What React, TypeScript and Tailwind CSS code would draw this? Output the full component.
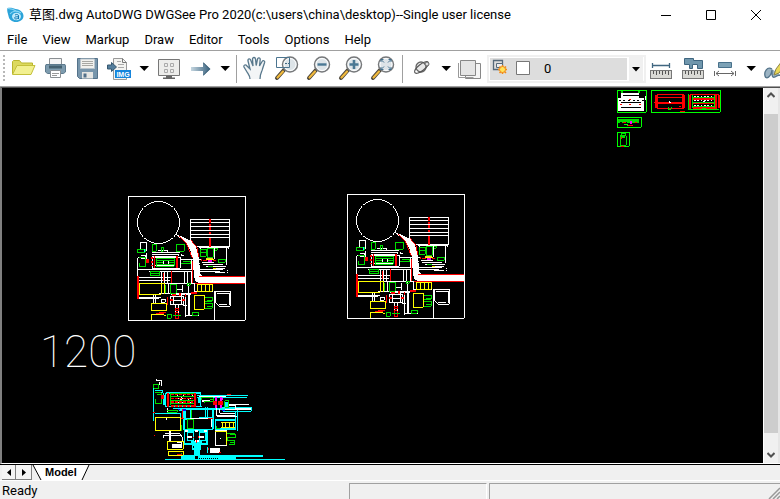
import React from "react";

const menus = ["File", "View", "Markup", "Draw", "Editor", "Tools", "Options", "Help"];

function Tool({ label, children }: { label: string; children: React.ReactNode }) {
  return (
    <button type="button" aria-label={label} className="h-8 w-8 shrink-0">
      <svg viewBox="0 0 32 32" className="h-8 w-8" fill="none">
        {children}
      </svg>
    </button>
  );
}

function Caret({ label }: { label: string }) {
  return (
    <button type="button" aria-label={label} className="h-8 w-4 shrink-0">
      <svg viewBox="0 0 16 32" className="h-8 w-4">
        <path d="M3.500 14h9.500L8.250 19z" fill="#000" />
      </svg>
    </button>
  );
}

function Separator() {
  return <div className="h-7 w-px shrink-0 bg-[#a0a0a0]" />;
}

function Lens({ children }: { children?: React.ReactNode }) {
  return (
    <>
      <path d="M13 18l-7 8" stroke="#4b4438" strokeWidth="4" strokeLinecap="round" />
      <path d="M12 19.500l-5.500 6" stroke="#f0b93c" strokeWidth="2.200" strokeLinecap="round" />
      <circle cx="19" cy="12.500" r="7.500" fill="#dde4e8" stroke="#77797b" strokeWidth="1.500" />
      <circle cx="19" cy="12.500" r="6" stroke="#fff" strokeWidth="1" />
      {children}
    </>
  );
}

function RulerBase() {
  return (
    <>
      <rect x="5.500" y="18.500" width="21" height="8" fill="#d9d9d5" stroke="#777" />
      <path d="M8.500 19v3M11.500 19v4M14.500 19v3M17.500 19v4M20.500 19v3M23.500 19v4" stroke="#555" />
    </>
  );
}

function FloorPlan() {
  return (
    <g fill="none" strokeWidth="3">
      <g stroke="#fff">
        <path d="M25.500 19.500h351v372h-351z" />
        <circle cx="115.500" cy="97.500" r="63" />
        <path d="M211.500 88.500h117v82.500h-117zM211 97.500h117M211 109.500h117M211 121.500h117M211 133.500h117M211 142.500h117M211 154.500l18 16.500" />
        <path d="M61.500 180v-22.500h18v27M52.500 205v54M55.500 202.500h24M79.500 190v18M64.500 196.500h12v9h-12" />
        <path d="M97.500 187.500h84M115.500 181.500h28v9M97.500 193.500h78v6h-78M97.500 199.500v36h84v-34h-84M130.500 210.500h15v14h-15zM184.500 196.500h8M184.500 193v6M106.500 225.500h60" />
        <path d="M184.500 208.500h62M181.500 220.500h60M214.500 208v30M190.500 214.500h22" />
        <path d="M52.500 238.500h186M88.500 244.500h126M52.500 262.500h102M52.500 271.500h98M55.500 280.500h182M124.500 244v34M133.500 247v50M142.500 244v34M193.500 244v36M202.500 244v36M205.500 283v96M214.500 244v34" />
        <path d="M237.500 172.500h90M241.500 175v24M283.500 172v36M319.500 172v54M325.500 168v8M246.500 217.500h36M249.500 223.500h60M258.500 229.500h60M240.500 238.500h70M240.500 244.500h60M282.500 236.500h34M285.500 246.500h30M322 240v3M322 246v3" />
        <path d="M52.500 304v22.500h66M58.500 322.500h66M124.500 328.500h12v9h-12zM100.500 316v24M106.500 316v24M118.500 310.500h108M151.500 318.500h40v26h-40zM160.500 315v30M184.500 315v30M160.500 330.500h22M166.500 345v40M175.500 345v40M196.500 318v62M190.500 345.500h12M208.500 316v62h30M199.500 376.500h16" />
        <path d="M169.500 283v24M187.500 286v20M172.500 298.500h14M145.500 280v30M154.500 313.500h60M223.500 283.500v26M226.500 304.500h52M283.500 304v87M286.500 304.500h44v45h-33l-10-12v-30M292.500 310.500h34M328.500 310v36M297 344.500h24" />
      </g>
      <path fill="#fff" d="M167 132l20 8 26 12 16 24 8 32 4 44 9 8h125v19h-138l-12-7-4-22-2-40-8-28-14-24-22-18z" />
      <g stroke="#f00">
        <path d="M270.500 88v10M270.500 101v6M270.500 112v8M270.500 126v7M270.500 145v25" strokeWidth="6" />
        <path d="M178.500 139l20 20 18 44M212.500 150l18 22 6 28M237.500 259.500h138M226.500 280.500h150M217.500 212v38M217.500 250v30" />
        <path d="M55.500 259v68" strokeWidth="6" />
        <path d="M103.500 199v36M169.500 199v36M173.500 199v36" />
        <path d="M154.500 244v36M142.500 320v24M133.500 304v8M196.500 312.500v8M130.500 250v22" strokeWidth="4" />
        <path d="M76 214.500h12" strokeWidth="12" />
        <path d="M97 202v4M97 214v4M97 224v4M150 330.500h8M186 330.500h8M181.500 309v8M157.500 316.500h10M214 310.500h16" strokeWidth="6" />
        <path d="M166.500 354.500h9v8h-9zM166.500 368.500h9v18h-9zM244.500 208v6M250 211.500h10M280 212.500h8M109 370.500h22M118 367.500h20" />
      </g>
      <g stroke="#00dc00">
        <path d="M97.500 163.500h12v21h-12zM124.500 172.500h6v12h-6zM169.500 163.500h24v21h-24zM52.500 190.500v-12h24v9h-24M58.500 202.500h18v28h-18v-12M91.500 244.500h27v13h-27zM94 249.500h24" />
        <path d="M109.500 205.500h54v24h-54zM112 211.500h52M112 217.500h18M148 217.500h14M112 223.500h52" />
        <path d="M151.500 283.500h18v26h-18zM241.500 178.500h18v21h-18zM241 187.500h18M262.500 175.500h18v27h-18zM286.500 175.500h6v6h-6M294.500 208.500h21v9h-21zM184 220.500h30M190.500 214.500h20v8M264 229.500h16M202.500 280.500h8v6h-8z" />
        <path d="M253.500 322.500h24v12h-24M256.500 340.500h21v15h-24v-24M262 330.500h16M262 349.500h16M216.500 367.500h19v9h-19zM142.500 373.500h12v12h-12zM160.500 376.500h24M137.500 286v24" />
      </g>
      <g stroke="#ff0">
        <path d="M58.500 280.500h66v33h-66zM124.500 280.500h10v33M94.500 340.500h45v22.500h-45zM94.500 390v-16.500h36l8 6M222.500 316.500h30v42h-30zM232.500 283.500h45v21h-45zM243.500 283v21M255.500 283v21M267.500 283v21M258 208.500h24M280 235.500h8" />
      </g>
      <path d="M258 204.500h22" stroke="#fc3" />
      <path d="M265 212.500h12" stroke="#f0f" strokeWidth="6" />
      <path d="M73.500 178v9" stroke="#0ff" />
    </g>
  );
}

function Elevation() {
  return (
    <g fill="none" strokeWidth="3">
      <g stroke="#0ff">
        <path d="M40.500 45v108M46.500 60.500h22v6h-20M70.500 68v36M46.500 100.500h20M76.500 68.500v42h110M79 66.500h105M181.500 70v42M172 76.500h152M172 82.500h150M100 115.500h190M196.500 112v30M202.500 112v30M46.500 129.500h76v14M244.500 112h90v12h-86M291.500 118v64M286.500 124v26" />
        <path d="M130.500 144.500h86v34h-86zM136.500 115v30M130 118.500h160M151.500 120v24M217.500 115v64M226.500 148.500h60v30h-60z" />
        <path d="M174 92h10M252 104h16" strokeWidth="16" />
        <path d="M79 68h105M73 74v30M130 147h22M116 120.500h20M176 145h44M224 151.500h64M224 176.500h64M132 118v60M220 118v58" strokeWidth="6" />
        <path d="M133.500 180v42h68v-42zM142.500 186v26h18v-26zM178.500 186v26h18v-26zM154 216.500h32M157.500 225h24v12h-24z" strokeWidth="5" />
        <path d="M163 220h16v36h-16z" fill="#0ff" />
        <path d="M201.500 232v18M75 268.500h360" />
      </g>
      <path d="M123 255h246v6h-81v7h-165z" fill="#0ff" />
      <path d="M165 258h9v8h-9z" fill="#000" />
      <path d="M178 265.500h56" stroke="#000" strokeDasharray="3 3" />
      <g stroke="#fff">
        <path d="M52 30.500h12v18M49.500 27v6M58.500 36v8M178 79.500h80M230.500 90v48h56M239.500 118v12h46M230 138.500h60M248 129.500h38M266 106.500h22v10h40M268 102.500h58M256 119.500h76M286 114.500h46" />
        <path d="M106 86.500h54M112 76v8M121 84v10M131 76v10M145 84v10M157 76v10M91.500 72v34M124.500 68v44M127.500 120v22M79.500 145v6M82.500 115v10M106 98.500h54" strokeDasharray="6 3" />
        <path d="M88.500 180v36M92.500 180v36M70.500 204v-6.500h52M76 191.500h44l8 12v14M82.500 216v16M112 218.500h14v16M151.500 145.500h64M214.500 148v22M226.500 182.500h34v44h-34zM240 205.500h3" />
        <path d="M142 200h14M178 200h14M166 212h10M164 184h10M136 184h8M192 184h8M186 94.500h24" strokeWidth="6" />
        <path d="M97 229h26M209 242h30" strokeWidth="13" />
        <path d="M0 280.500h465" />
      </g>
      <g stroke="#00dc00">
        <path d="M40.500 54v-9h16v10h-14M46.500 69h18v33h-18v-14M50 72.500h12M92.500 70.500h72v35h-72zM92 79.500h70M92 91.500h70M92 101.500h70M184.500 90v-6.500h36v10h-28v6M211 88.500h8M254.500 92h12v20h-12zM82 120.500h30v6h-30M153.500 120v24M142.500 148.500h18v28h-18zM124.500 166v16M230.500 167v10h10M262.500 191.500h24v12h-24v8h22v12h-18M270 194.500h16M270 216.500h16M124.500 248v8" />
      </g>
      <g stroke="#f00">
        <path d="M84.500 68v42M165.500 68v42" strokeWidth="8" />
        <path d="M64 81h8" strokeWidth="14" />
        <path d="M92 73.500h68M92 85h68M92 96.500h68M92 108.500h70" strokeDasharray="9 3" strokeWidth="4" />
        <path d="M219 98h12M234 98h14" strokeWidth="12" />
        <path d="M260 74.500h12M40 127.500h6M42 196.500h4M127.500 118v28M122 145.500h10M204 145.500h14M176.500 198v6M168.500 210v8M112 252.500h14M204.500 234v6M238 247.500h6M160.500 200v4" />
      </g>
      <g stroke="#f0f" strokeWidth="7">
        <path d="M228 81v12M228 104v10M243 81v12M243 104v10M240 87h10" />
      </g>
      <g stroke="#ff0">
        <path d="M46.500 142.500h76v39h-76zM82.500 213.500h48v24h-48zM85.500 243.500h45v13h-45zM260 184v40M226 184.500h34M244 157.500h40M244 171.500h40M248 157v14M258 157v14M269 157v14M281 157v14" />
      </g>
      <path d="M114 118.500h7M130 120.500h8M246 121.500h8" stroke="#00f" strokeWidth="5" />
    </g>
  );
}

function Sheets() {
  return (
    <g fill="none" strokeWidth="3">
      <path d="M64 40h54v13h13v40h-77v-40h10z" fill="#fff" />
      <path d="M68 47.500h48M64 66.500h60M64 82.500h60" stroke="#000" />
      <path d="M56 60.500h76" stroke="#000" strokeDasharray="6 8" />
      <path d="M136.500 48v12" stroke="#fff" />
      <path d="M64 36h6M114 36h6" stroke="#0c0" strokeWidth="8" />
      <path d="M60 74.500h6M88 74.500h4M116 74.500h6M88 58.500h4" stroke="#f00" />
      <path d="M52.500 31.500h87v66h-87zM154.500 31.500h207v66h-207zM52.500 112.500h72v30h-72zM52.500 157.500h36v42h-36z" stroke="#0f0" />
      <g stroke="#f00">
        <path d="M169.500 44v40M250.500 44v40" strokeWidth="8" />
        <path d="M172 44.500h80M174 52.500h74M174 66.500h74M174 71.500h74M172 85.500h80M163 66.500h4M240 94.500h16M236 80h8" />
        <path d="M268.500 44v42M348.500 44v42" strokeWidth="8" />
        <path d="M270 43.500h86M278 58h70M278 71h70M278 84.500h70M357.500 44v40" strokeWidth="5" />
      </g>
      <g stroke="#00dc00">
        <path d="M264.500 42v46h92M276.500 46v38M342.500 46v38M278 53.500h64M278 66.500h64M278 80.500h64M205.500 82v6h9v-6M307 86.500h10" />
      </g>
      <path d="M282 49.500h58M282 62.500h58M282 76.500h58" stroke="#fff" strokeDasharray="5 5" />
      <path d="M207 66.500h6M209.500 62v4M310 66h6" stroke="#fff" />
      <path d="M54 124h64" stroke="#00dc00" strokeWidth="12" />
      <path d="M60 126.500h50" stroke="#000" strokeDasharray="5 10" />
      <path d="M72 132.500h10v5" stroke="#0f0" />
      <path d="M70 127.500h8M104 127.500h8M84 136.500h14" stroke="#f00" />
      <path d="M90 127.500h6" stroke="#f0f" strokeWidth="7" />
      <path d="M64.500 160.500h12v9h-12zM61.500 168v28h18v-28zM66 172.500h10" stroke="#00dc00" />
      <path d="M64.500 172v5M64 198.500h9" stroke="#f00" />
    </g>
  );
}

export default function App() {
  return (
    <div className="flex h-screen w-full flex-col overflow-hidden bg-[#f0f0f0] font-['Roboto','Noto_Sans_CJK_SC',sans-serif] text-[13px] text-black">
      <header className="flex h-[29px] shrink-0 items-center bg-white">
        <svg viewBox="0 0 20 18" className="ml-1.5 h-[18px] w-5 shrink-0">
          <path d="M1.500 2c3-.5 5 0 8 1 5 .5 8 3.500 8 7s-3.500 6-7.500 6-7-2.500-7.500-6C2 7 .5 5 1.500 2z" fill="#2ba3d9" />
          <path d="M2 2.500c3 0 6 1 9 3M4 8c2-3 7-4 11-1" stroke="#8bd7f5" strokeWidth="1.200" fill="none" />
          <ellipse cx="10.500" cy="10.500" rx="4.500" ry="3.800" fill="#bfe9fa" />
          <path d="M9 9c2-1 3.500-.5 3.500 1v3M12.300 10.800c-3-.3-4 .5-3.600 1.500.5 1 2.600.7 3.600-.5" stroke="#1179b3" strokeWidth="1" fill="none" />
        </svg>
        <h1 className="ml-[3px] whitespace-nowrap text-[13px] leading-5">
          草图.dwg AutoDWG DWGSee Pro 2020(c:\users\china\desktop)--Single user license
        </h1>
        <div className="ml-auto mr-px flex">
          <button type="button" aria-label="Minimize" className="flex h-7 w-[45px] items-center justify-center">
            <svg viewBox="0 0 12 12" className="h-3 w-3"><path d="M1 6.500h10" stroke="#000" /></svg>
          </button>
          <button type="button" aria-label="Maximize" className="flex h-7 w-[45px] items-center justify-center">
            <svg viewBox="0 0 12 12" className="h-3 w-3"><path d="M1.500 1.500h9v9h-9z" fill="none" stroke="#000" /></svg>
          </button>
          <button type="button" aria-label="Close" className="flex h-7 w-[46px] items-center justify-center">
            <svg viewBox="0 0 12 12" className="h-3 w-3"><path d="M1 1l10 10M11 1L1 11" stroke="#000" /></svg>
          </button>
        </div>
      </header>

      <nav className="flex h-[22px] shrink-0 items-center gap-[15px] border-b border-[#a0a0a0] bg-white pl-[7px]">
        {menus.map((m) => (
          <button key={m} type="button" className="leading-5">{m}</button>
        ))}
      </nav>

      <div role="toolbar" aria-label="Main" className="flex h-9 shrink-0 items-start overflow-hidden border-b border-[#a0a0a0] bg-white pt-px">
        <div className="ml-[3px] mr-[3px] mt-[3px] h-7 w-0.5 shrink-0 bg-[repeating-linear-gradient(#b8b8b8_0_2px,#fff_2px_4px)]" />
        <Tool label="Open">
          <path d="M4.500 22V9.500l1-1h6l2 2.500h11v4" fill="#dcd95e" stroke="#b9b52c" />
          <path d="M4.500 22.500L9 13.500h18l-4 9z" fill="#f2f090" stroke="#c4c03a" />
        </Tool>
        <Tool label="Print">
          <path d="M9.500 13V6.500h12V13" fill="#f4f4f4" stroke="#8a8f93" />
          <path d="M6 12.500h19l.5 1.500v6l-2 1.500h-16L5.500 20v-6z" fill="#7d9bae" stroke="#5d7a8d" />
          <path d="M9 13.500h13v3H9z" fill="#44606f" />
          <path d="M10.500 18.500h10v7h-10z" fill="#fff" stroke="#8a8f93" />
          <path d="M12 21.500h7M12 23.500h5" stroke="#999" />
        </Tool>
        <Tool label="Save">
          <path d="M5.500 6.500h20v20h-18l-2-2z" fill="#7896ac" stroke="#54728a" />
          <path d="M8.500 7h14v9.500h-14z" fill="#f1f1ee" stroke="#b9c4cc" />
          <path d="M10 9.500h11M10 11.500h11M10 13.500h11" stroke="#a8a8a4" />
          <path d="M10 20h11v6.500H10z" fill="#e6e6e3" />
          <path d="M11.500 21.500h3v4h-3z" fill="#53718a" />
        </Tool>
        <Tool label="Export image">
          <path d="M9.500 6.500h9l4 4v17h-13z" fill="#f4f4f1" stroke="#999" />
          <path d="M18.500 6.500v4h4" stroke="#777" />
          <path d="M13 9.500h4M14 12.500h6M14 15.500h6M12 25.500h7" stroke="#aaa" />
          <path d="M3.500 13h4v-2.500l5 4.500-5 4.500V17h-4z" fill="#547e9c" stroke="#365870" />
          <rect x="11" y="18" width="16" height="8" fill="#1685dc" />
          <text x="19" y="24.500" textAnchor="middle" fontSize="7" fontWeight="700" fill="#fff" fontFamily="Liberation Sans">IMG</text>
        </Tool>
        <Caret label="Export options" />
        <div className="w-px shrink-0" />
        <Tool label="Full screen">
          <path d="M5.500 7.500h21v16h-21z" fill="#ededeb" stroke="#777" />
          <path d="M11.500 11.500h3v3h-3zM17.500 11.500h3v3h-3zM11.500 17.500h3v3h-3zM17.500 17.500h3v3h-3z" stroke="#aaa" />
          <path d="M13 24h6v1.500h3v1.500H10v-1.500h3z" fill="#666" />
        </Tool>
        <Tool label="Next">
          <defs>
            <linearGradient id="arrowFill"><stop stopColor="#c5d6e0" /><stop offset="1" stopColor="#355f7c" /></linearGradient>
          </defs>
          <path d="M6 15h12v-5l7.500 7-7.500 7v-5H6z" fill="url(#arrowFill)" />
          <path d="M18.500 11l6 6-6 6" stroke="#43647a" />
        </Tool>
        <Caret label="Next options" />
        <div className="w-[3px] shrink-0" />
        <div className="mt-[3px] flex shrink-0"><Separator /></div>
        <div className="w-0.5 shrink-0" />
        <Tool label="Pan">
          <path d="M11 27c0-3-1.500-4.500-3-7l-3-5c-.6-2 1.500-3 3-1l3 3-2-8c-.4-2.300 2-2.800 2.800-.8L14 14 13.500 7c0-2 2.800-2 3 0l.7 6.500L18.500 7c.5-1.800 3-1.400 2.700.6L20.500 14l2.600-4.500c1-1.700 3-.7 2.500 1L23.500 17c-.5 3-2.500 4-2.500 10" fill="#f3f5f6" stroke="#58788c" strokeWidth="1.300" />
        </Tool>
        <Tool label="Zoom window">
          <Lens />
          <path d="M5.500 5.500h13v10h-13z" stroke="#4c7590" />
          <path d="M14 11.500h4M18.500 7v4" stroke="#3f6882" strokeDasharray="2 1" />
        </Tool>
        <Tool label="Zoom out"><Lens><path d="M14.500 12.500h9" stroke="#4a7894" strokeWidth="2.400" /></Lens></Tool>
        <Tool label="Zoom in"><Lens><path d="M14.500 12.500h9M19 8v9" stroke="#4a7894" strokeWidth="2.600" /></Lens></Tool>
        <Tool label="Zoom extents">
          <Lens><path d="M17 10.500l-3-3M14 10V7.500h2.500M21 10.500l3-3M24 10V7.500h-2.500M17 14.500l-3 3M14 15v2.500h2.500M21 14.500l3 3M24 15v2.500h-2.500" stroke="#416f8c" /></Lens>
        </Tool>
        <div className="w-[3px] shrink-0" />
        <div className="mt-[3px] flex shrink-0"><Separator /></div>
        <div className="w-0.5 shrink-0" />
        <Tool label="Orbit">
          <circle cx="16" cy="15" r="5" fill="#e8e8e8" stroke="#666" strokeWidth="1.300" />
          <ellipse cx="16.500" cy="15.500" rx="8.500" ry="3.200" transform="rotate(-38 16.500 15.500)" stroke="#555" strokeWidth="1.200" />
          <circle cx="22" cy="12" r="2" fill="#ddd" stroke="#666" />
        </Tool>
        <div className="w-px shrink-0" />
        <Caret label="Orbit options" />
        <Tool label="Layers">
          <path d="M11.500 11.500h15v15h-15z" fill="#f5f5f5" stroke="#888" />
          <path d="M4.500 11v14.500h15" stroke="#999" />
          <path d="M6.500 8.500h15v15h-15z" fill="#e5e5e5" stroke="#888" />
        </Tool>
        <div className="relative ml-px mt-[3px] h-7 w-[159px] shrink-0 border-2 border-[#f0f0f0] bg-white p-px">
          <select
            aria-label="Current layer"
            defaultValue="0"
            className="block h-[22px] w-[137px] appearance-none rounded-none bg-[#ddd] pl-[54px] text-[13px] leading-5 text-black outline-none"
          >
            <option value="0">0</option>
          </select>
          <svg viewBox="0 0 40 22" className="pointer-events-none absolute left-px top-px h-[22px] w-10" fill="none">
            <path d="M3.500 2.500h9v9h-9z" stroke="#56697a" strokeWidth="1.300" />
            <path d="M6.500 5.500h6v4h-6z" fill="#eee" stroke="#56697a" />
            <path d="M12.500 7v9M8 11.500h9M9.500 8.500l6.500 6.500M16 8.500L9.500 15" stroke="#f28a16" strokeWidth="1.500" />
            <circle cx="12.500" cy="11.500" r="3" fill="#ffe45c" stroke="#f28a16" />
            <path d="M26.500 3.500h13v13h-13z" fill="#fff" stroke="#777" />
          </svg>
          <div className="pointer-events-none absolute right-px top-0 flex h-6 w-3.5 items-center justify-center bg-[#f0f0f0]">
            <svg viewBox="0 0 8 5" className="h-[5px] w-2"><path d="M0 0h8L4 4.500z" fill="#000" /></svg>
          </div>
        </div>
        <div className="-ml-px flex shrink-0">
          <Tool label="Measure distance">
            <path d="M7 13.500h18M7.500 11v5M24.500 11v5" stroke="#3f6680" strokeWidth="1.300" />
            <RulerBase />
          </Tool>
          <Tool label="Measure area">
            <path d="M7.500 6.500h9v2h9v8h-5v-4h-5v4h-3v-4h-5z" fill="#7097ad" stroke="#3f6680" />
            <RulerBase />
          </Tool>
          <Tool label="Measure object">
            <path d="M9.500 10.500h13v5h-13z" fill="#7da2b6" stroke="#48718b" />
            <path d="M5.500 19v5M26.500 19v5M7 21.500h18M10 19l-3 2.500 3 2.500M22 19l3 2.500-3 2.500" stroke="#666" />
          </Tool>
        </div>
        <div className="w-0.5 shrink-0" />
        <Caret label="Measure options" />
        <div className="-ml-[3px] flex shrink-0">
          <Tool label="Draw freehand">
            <path d="M16 17c-5-3-8 3-7 7 1 4 6 1 7-6 0 6 0 8 3 7 3-2 4-2 7-1" fill="#9cb4c4" stroke="#54748a" strokeWidth="1.300" />
            <path d="M18 23l2-6 6-8 4 3-7 9z" fill="#ead957" stroke="#8d8447" />
          </Tool>
        </div>
      </div>

      <main className="flex min-h-0 flex-1 border-b border-l-2 border-[#808080] border-b-white border-t border-t-[#505050]">
        <div className="relative min-w-0 flex-1 overflow-hidden bg-black">
          <svg width="761" height="375" className="absolute left-0 top-0 block" shapeRendering="crispEdges">
            <g transform="translate(118 102) scale(.33333)"><FloorPlan /></g>
            <g transform="translate(337 100) scale(.33333)"><FloorPlan /></g>
            <g transform="translate(138 282) scale(.33333)"><Elevation /></g>
            <g transform="translate(598 -8) scale(.33333)"><Sheets /></g>
          </svg>
          <span className="absolute left-[38px] top-[238px] text-[44px] font-thin leading-[52px] text-white">1200</span>
        </div>
        <div className="flex w-[17px] shrink-0 flex-col border-l border-r-2 border-l-white border-r-[#e6e6e6] bg-[#f0f0f0]">
          <button type="button" aria-label="Scroll up" className="flex h-[26px] shrink-0 justify-center pt-[3px]">
            <svg viewBox="0 0 8 8" className="h-2 w-2"><path d="M.5 6L4 2.500 7.500 6" fill="none" stroke="#505050" strokeWidth="2" /></svg>
          </button>
          <div className="min-h-0 flex-1 bg-[#cdcdcd]" />
          <button type="button" aria-label="Scroll down" className="flex h-[30px] shrink-0 items-end justify-center pb-1">
            <svg viewBox="0 0 8 8" className="h-2 w-2"><path d="M.5 2L4 5.500 7.500 2" fill="none" stroke="#505050" strokeWidth="2" /></svg>
          </button>
        </div>
      </main>

      <div className="flex h-[17px] shrink-0 border-b border-t border-b-white border-t-black pl-0.5">
        <button type="button" aria-label="Previous layout" className="flex w-[14px] items-center justify-center border-b border-r border-[#808080] bg-[#f4f4f4]">
          <svg viewBox="0 0 4 7" className="h-[7px] w-1"><path d="M4 0v7L0 3.500z" /></svg>
        </button>
        <button type="button" aria-label="Next layout" className="flex w-4 items-center justify-center border-b border-r border-[#808080] bg-[#f4f4f4]">
          <svg viewBox="0 0 4 7" className="h-[7px] w-1"><path d="M0 0v7l4-3.500z" /></svg>
        </button>
        <div className="flex">
          <svg viewBox="0 0 10 15" className="h-[15px] w-2.5"><path d="M1 0h9v15H9z" fill="#fff" /><path d="M1 0l8 15" stroke="#000" fill="none" /></svg>
          <button type="button" className="bg-white px-[3px] font-['Liberation_Sans'] text-[11px] font-bold leading-[15px]">Model</button>
          <svg viewBox="0 0 10 15" className="h-[15px] w-2.5"><path d="M0 0h9L2 15H0z" fill="#fff" /><path d="M9 0L2 15" stroke="#000" fill="none" /></svg>
        </div>
      </div>

      <footer className="flex h-[18px] shrink-0 pt-0.5">
        <div className="w-[349px] shrink-0 pl-0.5 leading-4">Ready</div>
        <div className="w-[138px] shrink-0 border-l border-r border-t border-[#a0a0a0] border-r-white" />
        <div className="ml-0.5 flex flex-1 items-end justify-end border-l border-t border-[#a0a0a0]">
          <svg viewBox="0 0 12 12" className="h-3 w-3"><path d="M1 12L12 1M5 12l7-7M9 12l3-3" stroke="#999" strokeWidth="1.500" /></svg>
        </div>
      </footer>
    </div>
  );
}
